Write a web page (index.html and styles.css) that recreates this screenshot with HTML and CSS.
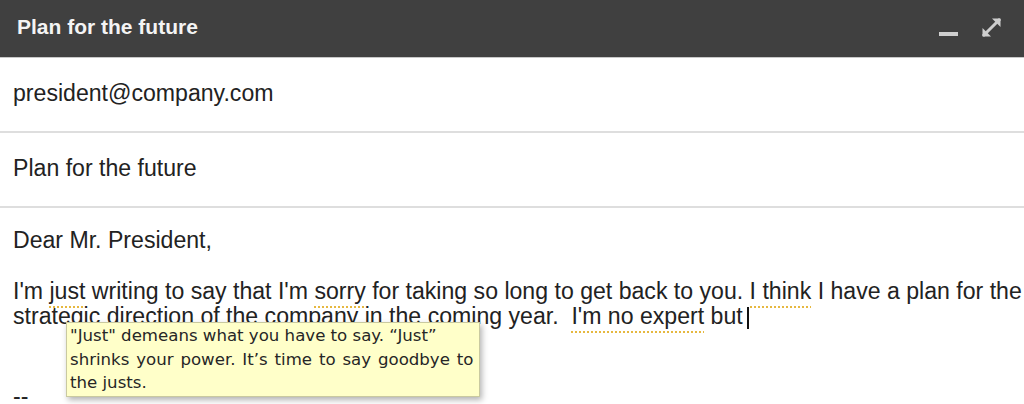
FILE: index.html
```html
<!DOCTYPE html>
<html lang="en">
<head>
<meta charset="utf-8">
<title>Plan for the future</title>
<link rel="stylesheet" href="styles.css">
</head>
<body>
<div class="compose">
  <header class="titlebar">
    <span class="title">Plan for the future</span>
    <div class="controls">
      <span class="minimize"></span>
      <svg class="expand" width="21" height="21" viewBox="0 0 21 21" aria-hidden="true">
        <path d="M3 18 L18 3" stroke="#cfcfcf" stroke-width="3" stroke-linecap="square"/>
        <path d="M11 1.5 H19.5 V10 Z" fill="#cfcfcf"/>
        <path d="M1.5 11 V19.5 H10 Z" fill="#cfcfcf"/>
      </svg>
    </div>
  </header>
  <div class="field">president@company.com</div>
  <div class="field">Plan for the future</div>
  <div class="body">
    <p>Dear Mr. President,</p>
    <p class="gap">I'm <span class="flag">just</span> writing to say that I'm <span class="flag">sorry</span> for taking so long to get back to you. <span class="flag">I think</span> I have a plan for the<br>strategic direction of the company in the coming year.&nbsp; <span class="flag">I'm no expert</span> but<span class="caret"></span></p>
    <p class="sig">--</p>
    <div class="tooltip">"Just" demeans what you have to say. “Just”<br><span class="tip2">shrinks your power. It’s time to say goodbye to</span><br>the justs.</div>
  </div>
</div>
</body>
</html>
```

FILE: styles.css
```css
* { box-sizing: border-box; }
html, body { margin: 0; padding: 0; background: #fff; }
body {
  width: 1024px;
  height: 404px;
  overflow: hidden;
  font-family: "Liberation Sans", Arial, sans-serif;
  color: #222;
}
.compose { display: flex; flex-direction: column; }
.titlebar {
  height: 58px;
  background: #404040;
  border-bottom: 1px solid #c8c8c8;
  display: flex;
  align-items: center;
  justify-content: space-between;
  padding: 0 22px 0 17px;
}
.title {
  color: #f4f4f4;
  font-weight: bold;
  font-size: 21px;
  margin-top: -3px;
}
.controls { display: flex; align-items: center; gap: 23px; }
.minimize {
  width: 19px; height: 4px;
  background: #cfcfcf;
  margin-top: 11px;
}
.expand { display: block; margin-top: -2px; }
.field {
  height: 75px;
  border-bottom: 2px solid #dedede;
  display: flex;
  align-items: center;
  padding: 0 13px 2px;
  font-size: 23.1px;
}
.body {
  position: relative;
  padding: 20px 0 0 13px;
  font-size: 23.1px;
  line-height: 25px;
  white-space: nowrap;
}
.body p { margin: 0; }
.body .gap { margin-top: 26px; }
.body .sig { margin-top: 55px; }
.flag {
  padding-bottom: 4px;
  background-image: linear-gradient(to right, #e6b840 55%, transparent 55%);
  background-size: 4px 2px;
  background-repeat: repeat-x;
  background-position: 0 100%;
}
.caret {
  display: inline-block;
  width: 2px;
  height: 22px;
  background: #111;
  margin-left: 4px;
  vertical-align: -5px;
}
.tooltip {
  position: absolute;
  left: 66px;
  top: 114px;
  width: 414px;
  padding: 1px 4px 1px 3px;
  background: #ffffc9;
  border: 1px solid #c9c9a0;
  box-shadow: 2px 3px 6px rgba(0,0,0,0.3);
  font-family: "DejaVu Sans", "Lucida Grande", sans-serif;
  font-size: 16.6px;
  line-height: 23.5px;
  color: #262626;
}
.tip2 { word-spacing: 1.6px; }
```
